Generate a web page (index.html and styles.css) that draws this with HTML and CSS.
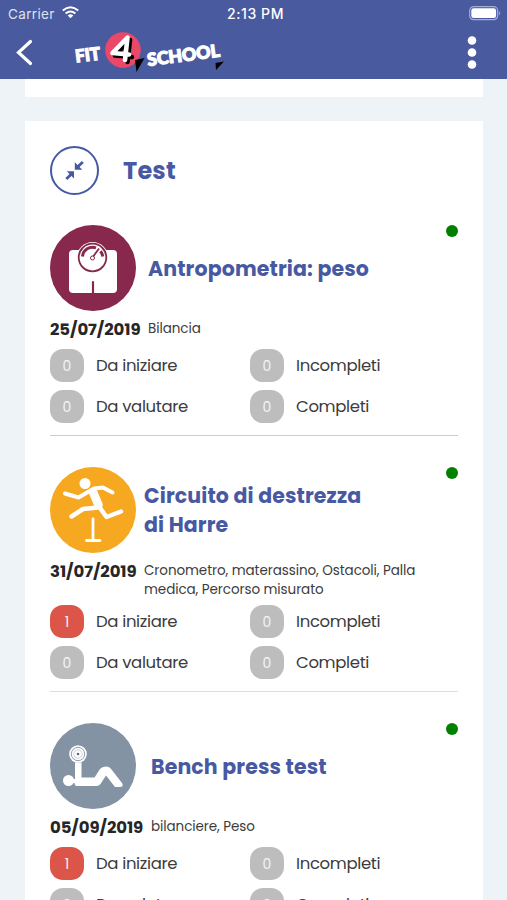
FILE: index.html
```
<!DOCTYPE html>
<html lang="it">
<head>
	<meta charset="utf-8">
	<title>Fit 4 School</title>
	<link rel="stylesheet" href="styles.css">
</head>
<body>
	<header>
		<div class="status">
			<div class="carrier">
				<span>Carrier</span>
				<svg width="17" height="13" viewBox="0 0 17 13" fill="none" stroke="#fff" stroke-width="2">
					<path d="M.8 4.600Q8.500-2 16.200 4.600M3.600 7.600Q8.500 3.300 13.400 7.600"/>
					<path d="M5.700 9.400Q8.500 7 11.300 9.400L8.500 12.300z" fill="#fff" stroke="none"/>
				</svg>
			</div>
			<span class="time">2:13 PM</span>
			<svg class="battery" width="32" height="15" viewBox="0 0 32 15">
				<rect x=".7" y=".7" width="28" height="13" rx="4" fill="none" stroke="#a5acd5" stroke-width="1.2"/>
				<rect x="2.3" y="2.3" width="24.8" height="9.8" rx="2.4" fill="#fff"/>
				<path d="M30.2 5q2 2.200 0 4.400z" fill="#a5acd5"/>
			</svg>
		</div>
		<div class="navbar">
			<svg class="back" width="18" height="28" viewBox="0 0 18 28">
				<path d="M14.500 2.500L2.500 13.500L14.500 24.500" fill="none" stroke="#fff" stroke-width="3.200" stroke-linecap="round"/>
			</svg>
			<svg class="logo" width="160" height="48" viewBox="0 0 160 48">
				<circle cx="53" cy="22" r="17.800" fill="#eb4869"/>
				<path d="M65 32L74.500 30L66.500 44zM145.500 35L154 33.500L146 42z" fill="#000"/>
				<g class="logo-text">
					<text x="6" y="34.500" font-size="17.500" textLength="25" lengthAdjust="spacingAndGlyphs" transform="rotate(-7 6 34.500)">FIT</text>
					<text x="78" y="38" font-size="17.500" textLength="73" lengthAdjust="spacingAndGlyphs" transform="rotate(-7.500 78 38)">SCHOOL</text>
				</g>
				<g fill="none" stroke-linejoin="round" stroke-linecap="round" stroke-width="4.600">
					<path d="M57.500 34L60 12L45 27.500L62 29" stroke="#000"/>
					<path d="M55 32L57.500 9.500L42.500 25L59 26.500" stroke="#fff"/>
				</g>
			</svg>
			<svg class="menu" width="10" height="34" viewBox="0 0 10 34" fill="#fff">
				<circle cx="5" cy="4.500" r="4.300"/>
				<circle cx="5" cy="16.500" r="4.300"/>
				<circle cx="5" cy="28.500" r="4.300"/>
			</svg>
		</div>
	</header>

	<main>
		<section class="card previous"></section>
		<section class="card">
			<div class="card-title">
				<svg width="49" height="49" viewBox="0 0 49 49">
					<circle cx="24.500" cy="24.500" r="23.500" fill="none" stroke="#4859a3" stroke-width="2"/>
					<path d="M24.800 16.300V23.800H32.300zM24 25.200V32.400L16.800 25.200z" fill="#4859a3"/>
					<path d="M27 21.500L32.800 16M22 27.500L16.300 33" stroke="#4859a3" stroke-width="2.800"/>
				</svg>
				<h1>Test</h1>
			</div>

			<article class="test weight">
				<div class="test-head">
					<svg class="icon" viewBox="0 0 86 86">
						<circle cx="43" cy="43" r="43" fill="#87284c"/>
						<rect x="19" y="25" width="48" height="43" rx="4" fill="#fff"/>
						<circle cx="42.500" cy="32.500" r="15.500" fill="#fff"/>
						<circle cx="42.500" cy="32.500" r="13.800" fill="#fff" stroke="#87284c" stroke-width="1.800"/>
						<path d="M32.500 31.500A10.200 10.200 0 0 1 46 22.800M50.500 26.200A10.200 10.200 0 0 1 52.700 31.500" fill="none" stroke="#87284c" stroke-width="3"/>
						<path d="M42.500 32.500L49 23.500" stroke="#87284c" stroke-width="1.800"/>
						<circle cx="42.500" cy="33" r="2" fill="#fff" stroke="#87284c"/>
						<path d="M43 57V68" stroke="#87284c" stroke-width="2.200" stroke-linecap="round"/>
					</svg>
					<h2>Antropometria: peso</h2>
					<i class="dot"></i>
				</div>
				<div class="info">
					<b>25/07/2019</b>
					<p>Bilancia</p>
				</div>
				<div class="counts">
					<div><span class="badge">0</span>Da iniziare</div>
					<div><span class="badge">0</span>Incompleti</div>
					<div><span class="badge">0</span>Da valutare</div>
					<div><span class="badge">0</span>Completi</div>
				</div>
			</article>

			<article class="test circuit">
				<div class="test-head">
					<svg class="icon" viewBox="0 0 86 86">
						<circle cx="43" cy="43" r="43" fill="#f6a820"/>
						<circle cx="35" cy="16.500" r="5.500" fill="#fff"/>
						<g fill="none" stroke="#fff" stroke-linecap="round" stroke-linejoin="round">
							<path d="M15 26.500L28.500 30.500L44 21.500L53 20.500L62.500 25.500" stroke-width="4"/>
							<path d="M43 25L48.500 38" stroke-width="8.500"/>
							<path d="M48 40.500L33 42L21.500 49.500M49 39.500L56.500 50L71 44.500" stroke-width="4.500"/>
							<path d="M43 52V73M36.500 73.500H50" stroke-width="2.800"/>
						</g>
					</svg>
					<h2>Circuito di destrezza<br>di Harre</h2>
					<i class="dot"></i>
				</div>
				<div class="info">
					<b>31/07/2019</b>
					<p>Cronometro, materassino, Ostacoli, Palla<br>medica, Percorso misurato</p>
				</div>
				<div class="counts">
					<div><span class="badge red">1</span>Da iniziare</div>
					<div><span class="badge">0</span>Incompleti</div>
					<div><span class="badge">0</span>Da valutare</div>
					<div><span class="badge">0</span>Completi</div>
				</div>
			</article>

			<article class="test bench">
				<div class="test-head">
					<svg class="icon" viewBox="0 0 86 86">
						<circle cx="43" cy="43" r="43" fill="#8493a4"/>
						<circle cx="28" cy="31" r="8.800" fill="#fff"/>
						<circle cx="28" cy="31" r="6.700" fill="none" stroke="#8493a4" stroke-width=".9"/>
						<circle cx="28" cy="31" r="4.200" fill="none" stroke="#8493a4" stroke-width=".4"/>
						<circle cx="28" cy="31" r="1.300" fill="#596878"/>
						<circle cx="18.500" cy="57.500" r="5.500" fill="#fff"/>
						<path d="M25 39.500H31.500V54.500H44.500L50 46Q52 43.500 56 43.500Q59.500 43.500 61.500 46.500L72 60Q74 64 70 64H65L56 52.500L50.500 61Q49 63 46.500 63H27Q24.500 63 24.500 60H20V56H25z" fill="#fff"/>
					</svg>
					<h2>Bench press test</h2>
					<i class="dot"></i>
				</div>
				<div class="info">
					<b>05/09/2019</b>
					<p>bilanciere, Peso</p>
				</div>
				<div class="counts">
					<div><span class="badge red">1</span>Da iniziare</div>
					<div><span class="badge">0</span>Incompleti</div>
					<div><span class="badge">0</span>Da valutare</div>
					<div><span class="badge">0</span>Completi</div>
				</div>
			</article>
		</section>
	</main>
</body>
</html>
```

FILE: styles.css
```
* {
	box-sizing: border-box;
}

body {
	font-family: Poppins, Inter, sans-serif;
	background-color: #eef3f8;
	color: #3c3c3c;
	margin: 0;
	height: 900px;
	overflow: hidden;
}

h1, h2, p {
	margin: 0;
}

svg {
	display: block;
	flex: none;
}

header {
	height: 79px;
	background-color: #4a5a9f;
	color: #fff;
}

.status {
	display: grid;
	grid-template-columns: 1fr auto 1fr;
	align-items: center;
	height: 27px;
	padding: 0 6px 0 8px;
	font: 13.5px Inter, sans-serif;
}

.carrier {
	display: flex;
	gap: 7px;
	color: #dfe2f0;
	letter-spacing: 0.35px;
}

.time {
	font-weight: 500;
	font-size: 14px;
	letter-spacing: 0.6px;
	margin-left: 2px;
}

.battery {
	justify-self: end;
}

.navbar {
	display: flex;
	align-items: center;
	height: 52px;
	padding: 0 30px 0 16px;
}

.logo {
	margin: -2px 0 0 36px;
}

.logo-text {
	font-family: Lato, sans-serif;
	font-weight: 900;
	fill: #fff;
	stroke: #fff;
	stroke-width: 1.2;
}

.menu {
	margin-left: auto;
}

main {
	padding: 0 24px 0 25px;
}

.card {
	background-color: #fff;
	padding: 25px;
}

.previous {
	height: 18px;
	padding: 0;
	margin-bottom: 24px;
}

.card-title {
	display: flex;
	align-items: center;
	gap: 24px;
	margin-bottom: 30px;
}

h1, h2 {
	color: #4859a3;
	font-weight: 700;
}

h1 {
	font-size: 24px;
	letter-spacing: 0.2px;
}

h2 {
	font-size: 20.5px;
	line-height: 29px;
	letter-spacing: 0.12px;
	white-space: nowrap;
}

.test {
	padding-bottom: 12px;
	margin-bottom: 31px;
	border-bottom: 1px solid #ccc;
}

.circuit {
	border-color: #ddd;
}

.test-head, .info {
	display: grid;
	grid-template-columns: 98px 1fr auto;
}

.circuit .test-head, .circuit .info {
	grid-template-columns: 94px 1fr auto;
}

.bench .test-head, .bench .info {
	grid-template-columns: 101px 1fr auto;
}

.test-head {
	align-items: center;
	height: 86px;
}

.icon {
	width: 86px;
	height: 86px;
}

.dot {
	align-self: start;
	width: 12px;
	height: 12px;
	border-radius: 50%;
	background-color: green;
}

.info {
	padding: 8px 0 6px;
	min-height: 38px;
	line-height: 19px;
	font-size: 13.5px;
	letter-spacing: -0.07px;
	white-space: nowrap;
}

.info b {
	font-size: 16.5px;
	line-height: 22px;
	color: #262626;
}

.counts {
	display: grid;
	grid-template-columns: 200px 200px;
	row-gap: 8px;
	font-size: 16.5px;
	letter-spacing: -0.35px;
}

.counts div {
	display: flex;
	align-items: center;
	gap: 12px;
	height: 33px;
	line-height: 34px;
}

.badge {
	width: 34px;
	height: 33px;
	border-radius: 13px;
	background-color: #bdbdbd;
	color: #f4f4f4;
	font-size: 14px;
	line-height: 34px;
	letter-spacing: 0;
	text-align: center;
}

.red {
	background-color: #dc5549;
}
```
